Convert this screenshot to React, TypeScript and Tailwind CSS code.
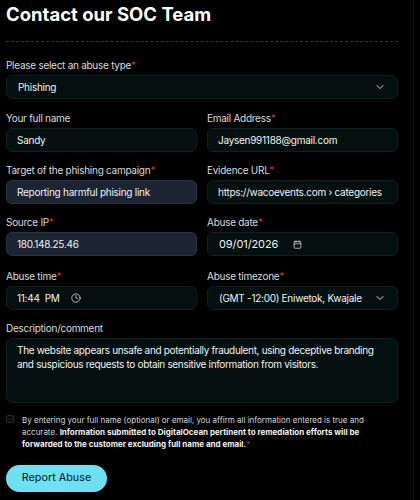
import React from 'react';
import { ChevronDown, Clock, Calendar } from 'lucide-react';

function Label({ text, required }: { text: string; required?: boolean }) {
  return (
    <label className="block text-[10px] tracking-[-0.27px] leading-[14px] text-[#d8dcdd] mb-[3px]">
      {text}
      {required && <span className="text-[#c7352b]">*</span>}
    </label>
  );
}

function Box({ children, filled, pl = 'pl-[10px]' }: { children: React.ReactNode; filled?: boolean; pl?: string }) {
  return (
    <div
      className={`h-[24px] rounded-[6px] border flex items-center text-[10px] tracking-[-0.27px] text-[#f0f3f3] whitespace-nowrap ${pl} ${
        filled ? 'bg-[#1c2434] border-[#2a3444]' : 'bg-[#03100f] border-[#0e2020]'
      }`}
    >
      {children}
    </div>
  );
}

export default function App() {
  return (
    <div className="w-[420px] h-[500px] bg-black overflow-hidden font-['Inter',sans-serif]">
      <div className="w-[414px] h-full border-r border-[#111414] pl-[6px] pr-[15px]">
        <h1 className="text-[18.5px] leading-[28px] font-bold text-white whitespace-nowrap">Contact our SOC Team</h1>
        <div className="mt-[13px] border-t border-dashed border-[#333838]" />

        <div className="mt-[16px]">
          <Label text="Please select an abuse type" required />
          <Box pl="pl-[11px]">
            <span className="flex-1">Phishing</span>
            <ChevronDown size={12} className="mr-[11px] text-[#d4d8d9]" />
          </Box>
        </div>

        <div className="mt-[12px] grid grid-cols-2 gap-x-[10px] gap-y-[11px]">
          <div>
            <Label text="Your full name" />
            <Box>Sandy</Box>
          </div>
          <div>
            <Label text="Email Address" required />
            <Box>Jaysen991188@gmail.com</Box>
          </div>
          <div>
            <Label text="Target of the phishing campaign" required />
            <Box filled>Reporting harmful phising link</Box>
          </div>
          <div>
            <Label text="Evidence URL" required />
            <Box>https://wacoevents.com › categories</Box>
          </div>
          <div>
            <Label text="Source IP" required />
            <Box filled>180.148.25.46</Box>
          </div>
          <div>
            <Label text="Abuse date" required />
            <Box pl="pl-[11px]">
              <span className="w-[74px] text-[11px] tracking-[-0.1px]">09/01/2026</span>
              <Calendar size={9} className="text-[#d4d8d9]" />
            </Box>
          </div>
          <div className="mt-[2px]">
            <Label text="Abuse time" required />
            <Box>
              <span className="whitespace-pre">11:44  PM</span>
              <Clock size={10} className="ml-[11px] text-[#d4d8d9]" />
            </Box>
          </div>
          <div className="mt-[2px]">
            <Label text="Abuse timezone" required />
            <Box pl="pl-[11px]">
              <span className="flex-1 overflow-hidden">(GMT -12:00) Eniwetok, Kwajale</span>
              <ChevronDown size={12} className="ml-[11px] mr-[11px] shrink-0 text-[#d4d8d9]" />
            </Box>
          </div>
        </div>

        <div className="mt-[11px]">
          <Label text="Description/comment" />
          <div className="h-[65px] rounded-[6px] border border-[#0e2020] bg-[#03100f] px-[10px] pt-[4px] text-[10px] tracking-[-0.33px] leading-[14px] text-[#f0f3f3]">
            The website appears unsafe and potentially fraudulent, using deceptive branding and suspicious requests to obtain sensitive information from visitors.
          </div>
        </div>

        <div className="mt-[11px] flex items-start">
          <div className="mt-[1px] w-[8px] h-[8px] shrink-0 rounded-[2px] border border-[#1c3030] bg-[#03100f]" />
          <p className="ml-[8px] text-[8px] leading-[12px] text-[#d4d8d9]">
            By entering your full name (optional) or email, you affirm all information entered is true and accurate.{' '}
            <span className="font-bold text-[#f0f2f2]">
              Information submitted to DigitalOcean pertinent to remediation efforts will be forwarded to the customer excluding full name and email.
            </span>
            <span className="text-[#c7352b]">*</span>
          </p>
        </div>

        <button className="mt-[15px] block w-[101px] h-[27px] rounded-full bg-[#6fe0f2] text-[10.8px] text-[#062024]">
          Report Abuse
        </button>
      </div>
    </div>
  );
}
